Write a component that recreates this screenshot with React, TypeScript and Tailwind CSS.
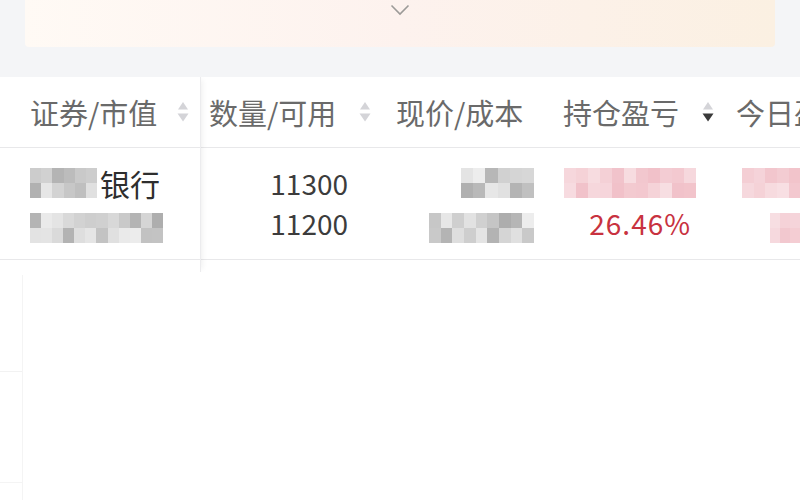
import React from "react";

const FONT = { fontFamily: '"Noto Sans CJK SC", "Noto Sans", sans-serif' };

function rand(seed: number) {
  let s = seed;
  return () => {
    s = (s * 9301 + 49297) % 233280;
    return s / 233280;
  };
}

function Mosaic({
  w,
  h,
  cols,
  rows,
  seed,
  red,
}: {
  w: number;
  h: number;
  cols: number;
  rows: number;
  seed: number;
  red?: boolean;
}) {
  const r = rand(seed);
  const cells: number[][] = [];
  for (let y = 0; y < rows; y++) {
    const row: number[] = [];
    for (let x = 0; x < cols; x++) row.push(r());
    cells.push(row);
  }
  const color = (a: number) => {
    if (red) {
      const alpha = 0.22 + (1 - a) * 0.22;
      return `rgba(222, 110, 128, ${alpha})`;
    }
    const v = Math.round(172 + a * 66);
    return `rgb(${v},${v},${v})`;
  };
  return (
    <div className="flex flex-col blur-[0.6px] shrink-0" style={{ width: w, height: h }}>
      {cells.map((row, i) => (
        <div key={i} className="flex flex-1">
          {row.map((c, j) => (
            <div key={j} className="flex-1" style={{ background: color(c) }} />
          ))}
        </div>
      ))}
    </div>
  );
}

function Sort({ active }: { active?: boolean }) {
  return (
    <svg width="12" height="26" viewBox="0 0 12 26" className="shrink-0">
      <polygon points="6,3 11,10.5 1,10.5" fill="#d4d4d8" />
      <polygon points="0.5,14.5 11.5,14.5 6,22.5" fill={active ? "#3a3a3a" : "#d4d4d8"} />
    </svg>
  );
}

export default function App() {
  return (
    <div className="w-[800px] h-[500px] overflow-hidden bg-white flex flex-col" style={FONT}>
      {/* top band */}
      <div className="h-[77px] shrink-0 bg-[#f4f5f7] px-[25px]">
        <div className="h-[47px] rounded-b-[4px] bg-gradient-to-r from-[#fffaf5] via-[#fdf2ee] to-[#fbf0e2] flex justify-center pt-[4px]">
          <svg width="20" height="12" viewBox="0 0 20 12">
            <polyline points="1.5,1.5 10,10 18.5,1.5" fill="none" stroke="#9c9a98" strokeWidth="1.6" />
          </svg>
        </div>
      </div>

      {/* table */}
      <div className="flex shrink-0 w-[800px] overflow-hidden">
        {/* fixed column */}
        <div className="w-[201px] shrink-0 flex flex-col border-r border-[#ececee] shadow-[4px_0_6px_-3px_rgba(0,0,0,0.07)] relative z-10 bg-white">
          <div className="h-[71px] flex items-center pl-[30px] border-b border-[#e8e8ea]">
            <span className="text-[29px] leading-none text-[#6a6a6a] w-[147px] whitespace-nowrap">证券/市值</span>
            <Sort />
          </div>
          <div className="h-[112px] flex flex-col pl-[30px] pt-[20px] border-b border-[#e8e8ea]">
            <div className="flex items-center h-[30px]">
              <Mosaic w={67} h={30} cols={6} rows={2} seed={7} />
              <span className="ml-[3px] text-[30px] leading-none text-[#2e2e2e]">银行</span>
            </div>
            <div className="mt-[15px]">
              <Mosaic w={133} h={30} cols={12} rows={2} seed={23} />
            </div>
          </div>
          <div className="h-[12px]" />
        </div>

        {/* scroll columns */}
        <div className="w-[599px] shrink-0 flex flex-col">
          <div className="h-[71px] flex items-center border-b border-[#e8e8ea] text-[29px] leading-none text-[#6a6a6a] whitespace-nowrap">
            <div className="w-[179px] shrink-0 pl-[8px] flex items-center">
              <span className="w-[150px]">数量/可用</span>
              <Sort />
            </div>
            <div className="w-[165px] shrink-0 pl-[16px]">现价/成本</div>
            <div className="w-[180px] shrink-0 pl-[18px] flex items-center">
              <span className="w-[139px]">持仓盈亏</span>
              <Sort active />
            </div>
            <div className="shrink-0 pl-[11px]">今日盈亏</div>
          </div>
          <div className="h-[112px] flex border-b border-[#e8e8ea] pt-[20px]">
            <div className="w-[147px] shrink-0 flex flex-col items-end text-[28px] leading-none text-[#3c3c3c]">
              <div className="h-[30px] flex items-center">11300</div>
              <div className="h-[30px] mt-[10px] flex items-center">11200</div>
            </div>
            <div className="w-[186px] shrink-0 flex flex-col items-end">
              <Mosaic w={73} h={30} cols={6} rows={2} seed={41} />
              <div className="mt-[15px]">
                <Mosaic w={105} h={30} cols={9} rows={2} seed={5} />
              </div>
            </div>
            <div className="w-[162px] shrink-0 flex flex-col items-end">
              <Mosaic w={132} h={30} cols={11} rows={2} seed={13} red />
              <div className="h-[30px] mt-[10px] pr-[5px] flex items-center text-[28px] leading-none tracking-[1px] text-[#c8323f]">
                26.46%
              </div>
            </div>
            <div className="flex-1 flex flex-col items-start overflow-hidden">
              <div className="ml-[46px]">
                <Mosaic w={70} h={30} cols={6} rows={2} seed={31} red />
              </div>
              <div className="ml-[74px] mt-[15px]">
                <Mosaic w={40} h={30} cols={4} rows={2} seed={19} red />
              </div>
            </div>
          </div>
          <div className="h-[12px]" />
        </div>
      </div>

      {/* empty area */}
      <div className="flex-1 flex">
        <div className="w-[23px] border-r border-[#f4f4f4] mt-[3px] flex flex-col">
          <div className="h-[97px] border-b border-[#f2f2f2]" />
          <div className="h-[111px] border-b border-[#f4f4f4]" />
        </div>
      </div>
    </div>
  );
}
